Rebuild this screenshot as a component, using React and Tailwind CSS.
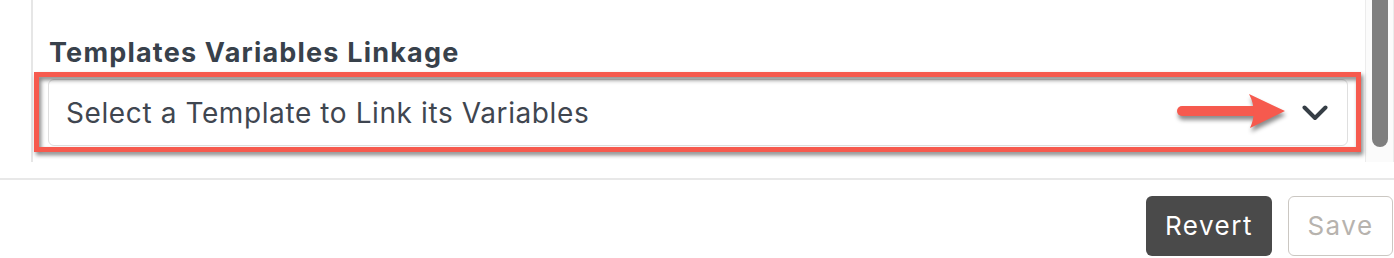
import React from "react";

// Chevron shown at the right of the select
function Chevron() {
  return (
    <svg width="26" height="16" viewBox="0 0 26 16" fill="none">
      <polyline
        points="2.5,2.5 13,13 23.5,2.5"
        stroke="#363e46"
        strokeWidth="4"
        strokeLinecap="round"
        strokeLinejoin="round"
      />
    </svg>
  );
}

// Red annotation arrow pointing at the chevron
function RedArrow() {
  return (
    <svg
      width="112"
      height="38"
      viewBox="0 0 112 38"
      className="absolute left-[1128px] top-[14px] drop-shadow-[1px_4px_2px_rgba(0,0,0,0.45)]"
    >
      <line x1="6" y1="18" x2="84" y2="18" stroke="#f65a4e" strokeWidth="10" strokeLinecap="round" />
      <path d="M73 1 L109 18 L74 35 Q82 18 73 1 Z" fill="#f65a4e" />
    </svg>
  );
}

export default function App() {
  return (
    <div className="w-[1394px] h-[258px] bg-white overflow-hidden font-['Inter',sans-serif]">
      <div className="flex h-[162px]">
        <div className="w-[31px] shrink-0" />
        <div className="flex-1 border-l-2 border-[#e6e6e6] pl-[15px] pr-[17px] pt-[39px]">
          <div className="text-[27px] leading-none font-bold tracking-[1.2px] text-[#38414b] pl-px">
            Templates Variables Linkage
          </div>
          <div className="relative mt-[13px]">
            <div className="h-[67px] flex items-center justify-between border border-[#dfdfdf] rounded-[6px] pl-[17px] pr-[19px] bg-white">
              <span className="text-[28px] leading-none tracking-[0.6px] text-[#3f4650]">
                Select a Template to Link its Variables
              </span>
              <Chevron />
            </div>
            <RedArrow />
            <div className="absolute -left-[14px] -top-[7px] -right-[13px] -bottom-[6px] border-[5px] border-[#f65a4e] drop-shadow-[2px_3px_2px_rgba(0,0,0,0.5)]" />
          </div>
        </div>
        <div className="w-[29px] shrink-0 border-l border-r border-[#ececec] bg-[#fbfbfb] flex justify-center">
          <div className="w-[16px] h-[155px] -mt-[8px] rounded-full bg-[#7f7f7f]" />
        </div>
      </div>
      <div className="mt-[16px] border-t-2 border-[#e8e8e8]" />
      <div className="flex justify-end gap-[16px] pt-[16px] pr-px">
        <button className="w-[126px] h-[60px] rounded-[6px] bg-[#4a4a4a] text-white text-[26px] tracking-[1.5px] leading-none">
          Revert
        </button>
        <button className="w-[105px] h-[60px] rounded-[6px] border-[1.5px] border-[#cbc7c2] bg-white text-[#b7b3ae] text-[26px] tracking-[1.5px] leading-none">
          Save
        </button>
      </div>
    </div>
  );
}
